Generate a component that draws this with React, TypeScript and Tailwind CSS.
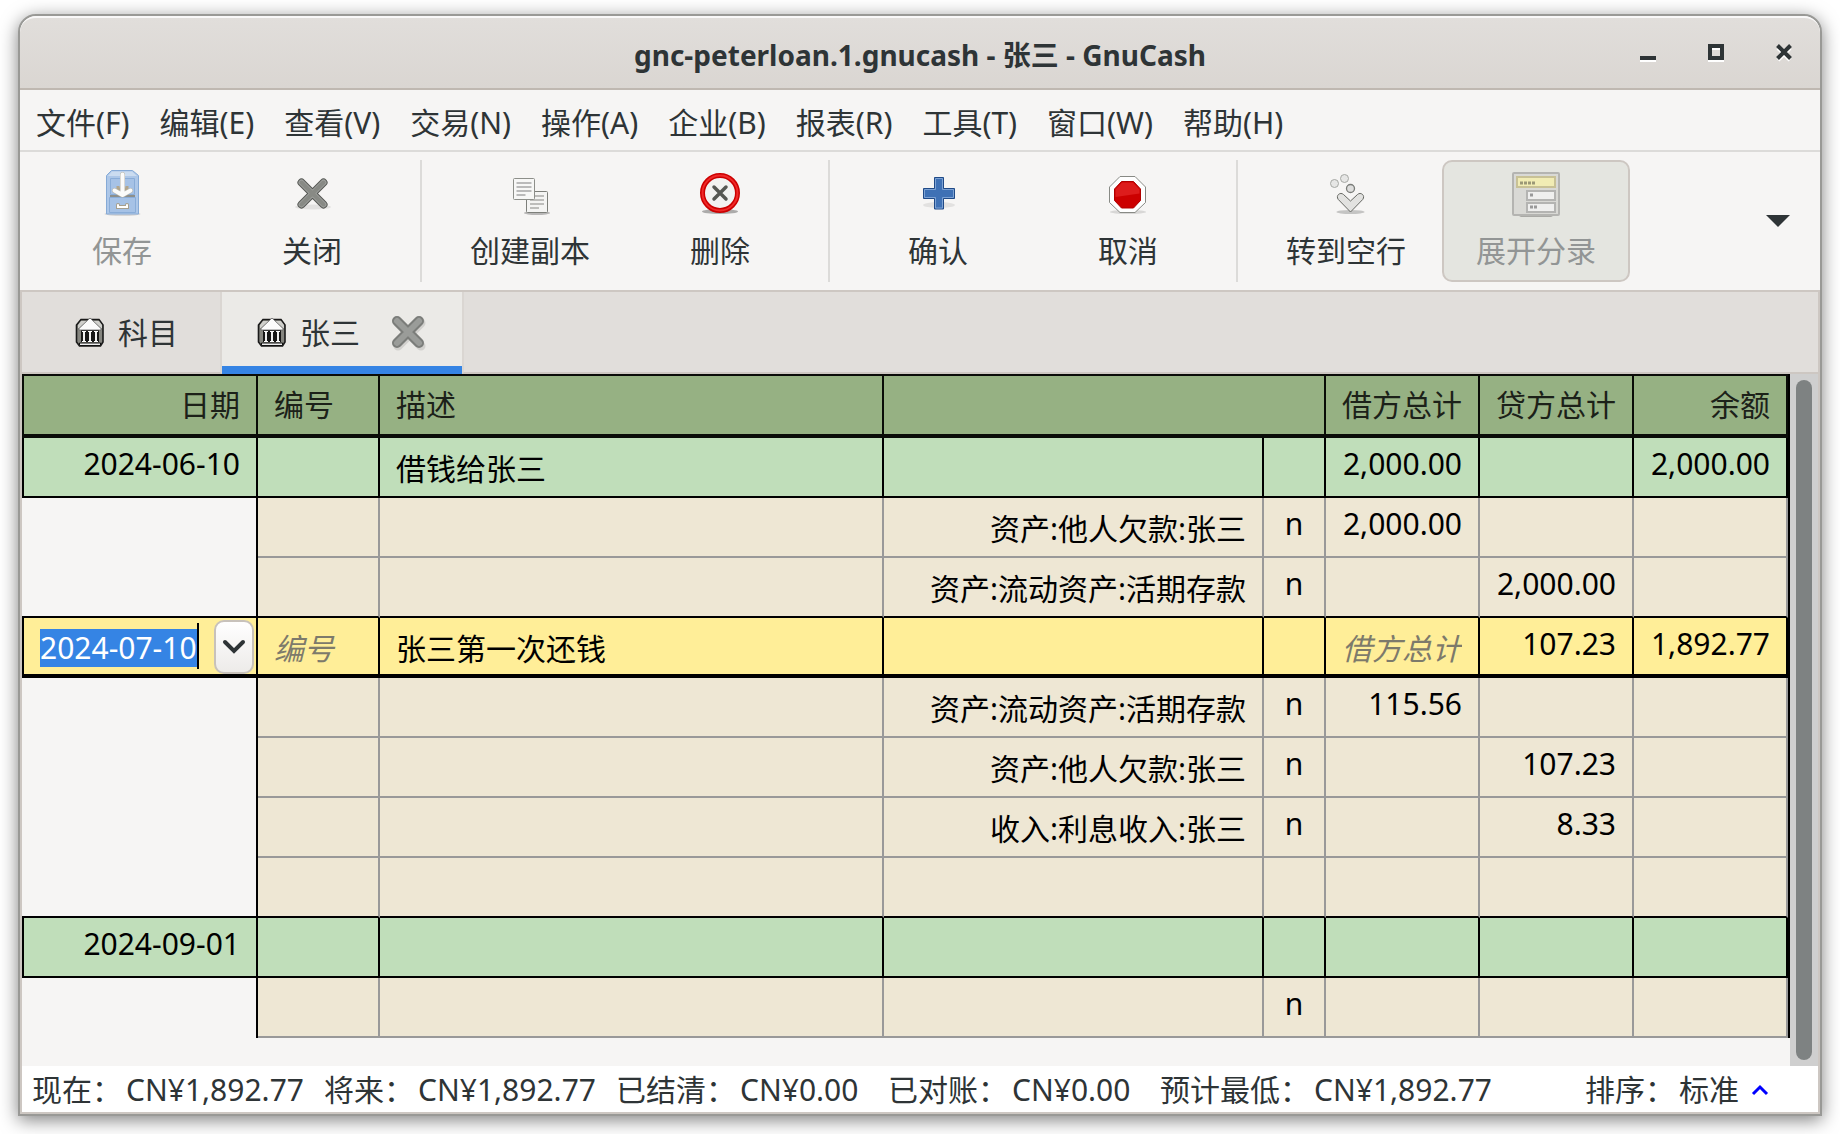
import React from "react";
import clsx from "clsx";

const menus = [
  "文件(F)",
  "编辑(E)",
  "查看(V)",
  "交易(N)",
  "操作(A)",
  "企业(B)",
  "报表(R)",
  "工具(T)",
  "窗口(W)",
  "帮助(H)",
];

type Row = {
  kind: "trans" | "split" | "active";
  date?: string;
  desc?: string;
  account?: string;
  flag?: string;
  debit?: string;
  credit?: string;
  balance?: string;
};

const rows: Row[] = [
  { kind: "trans", date: "2024-06-10", desc: "借钱给张三", debit: "2,000.00", balance: "2,000.00" },
  { kind: "split", account: "资产:他人欠款:张三", flag: "n", debit: "2,000.00" },
  { kind: "split", account: "资产:流动资产:活期存款", flag: "n", credit: "2,000.00" },
  { kind: "active", date: "2024-07-10", desc: "张三第一次还钱", credit: "107.23", balance: "1,892.77" },
  { kind: "split", account: "资产:流动资产:活期存款", flag: "n", debit: "115.56" },
  { kind: "split", account: "资产:他人欠款:张三", flag: "n", credit: "107.23" },
  { kind: "split", account: "收入:利息收入:张三", flag: "n", credit: "8.33" },
  { kind: "split" },
  { kind: "trans", date: "2024-09-01" },
  { kind: "split", flag: "n" },
];

const summary = [
  { label: "现在：", value: "CN¥1,892.77", width: "w-[292px]" },
  { label: "将来：", value: "CN¥1,892.77", width: "w-[292px]" },
  { label: "已结清：", value: "CN¥0.00", width: "w-[272px]" },
  { label: "已对账：", value: "CN¥0.00", width: "w-[272px]" },
  { label: "预计最低：", value: "CN¥1,892.77", width: "" },
];

function SaveIcon() {
  return (
    <svg viewBox="0 0 48 48" className="w-12 h-12">
      <ellipse cx="24.500" cy="44" rx="18" ry="2" fill="#000" opacity=".12" />
      <path d="M8.500 5.500l5-5h21l6 5v38.500h-32z" fill="#adc7e8" stroke="#86aad6" />
      <path d="M10 6l4-4.500h20L39 6z" fill="#cbdcf0" />
      <path d="M12.500 8.500h24v16h-24zM11.500 27.500h26v15h-26z" fill="#a6c2e6" stroke="#8aadd8" />
      <path d="M12 26h25" stroke="#8d8f8b" strokeWidth="2" />
      <path d="M20 16v3h9v-3" fill="none" stroke="#b3a68c" strokeWidth="3" />
      <path d="M20 35v2h9v-2" fill="none" stroke="#a79f8d" strokeWidth="4" strokeLinecap="round" />
      <path d="M20 35v2h9v-2" fill="none" stroke="#fff" strokeWidth="2" strokeLinecap="round" />
      <path d="M24.500 4.500v20M16.500 20.500l8 4.500 8-4.500" fill="none" stroke="#b9b6ab" strokeWidth="5" strokeLinecap="round" strokeLinejoin="round" />
      <path d="M24.500 4.500v20M16.500 20.500l8 4.500 8-4.500" fill="none" stroke="#fbfbfa" strokeWidth="4" strokeLinecap="round" strokeLinejoin="round" />
    </svg>
  );
}

function CloseIcon() {
  return (
    <svg viewBox="0 0 48 48" className="w-12 h-12">
      <ellipse cx="25" cy="37" rx="18" ry="2.500" fill="#000" opacity=".08" />
      <path d="M13.500 12.500l22 22M35.500 12.500l-22 22" stroke="#555753" strokeWidth="8" strokeLinecap="round" />
      <path d="M13.500 12.500l22 22M35.500 12.500l-22 22" stroke="#a0a29f" strokeWidth="6" strokeLinecap="round" />
      <path d="M13.500 12.500l22 22M35.500 12.500l-22 22" stroke="#888a85" strokeWidth="4" strokeLinecap="round" />
    </svg>
  );
}

function DuplicateIcon() {
  return (
    <svg viewBox="0 0 48 48" className="w-12 h-12">
      <ellipse cx="31" cy="43" rx="13" ry="2" fill="#000" opacity=".25" />
      <rect x="20.500" y="21.500" width="21" height="21" rx="1" fill="#f4f4f3" stroke="#7d7f7a" />
      <path d="M24 26h14M24 30h14M24 34h14M24 38h9" stroke="#bdbdbb" strokeWidth="2" />
      <rect x="7.500" y="8.500" width="21" height="21" rx="1" fill="#f7f7f6" stroke="#8d8f8a" />
      <path d="M10.500 13h15M10.500 17h15M10.500 21h15M10.500 25h9" stroke="#bababa" strokeWidth="2" />
    </svg>
  );
}

function DeleteIcon() {
  return (
    <svg viewBox="0 0 48 48" className="w-12 h-12">
      <ellipse cx="24" cy="41.500" rx="18" ry="2.500" fill="#000" opacity=".3" />
      <circle cx="24" cy="23" r="17.500" fill="#f2f2f1" stroke="#cc0000" strokeWidth="5" />
      <circle cx="24" cy="23" r="17.500" fill="none" stroke="#ef2929" strokeWidth="2" />
      <path d="M18 17l12 12M30 17L18 29" stroke="#555753" strokeWidth="3.500" strokeLinecap="round" />
    </svg>
  );
}

function PlusIcon() {
  return (
    <svg viewBox="0 0 48 48" className="w-12 h-12">
      <ellipse cx="25" cy="35" rx="16" ry="3" fill="#000" opacity=".08" />
      <path
        d="M20.500 7.500h9v11h11v10h-11v10.500h-9V28.500H9.500v-10h11z"
        fill="#3f71b5"
        stroke="#204a87"
        strokeLinejoin="round"
      />
      <path d="M21.500 8.500h7v11h11v8h-11V38h-7V27.500h-11v-8h11z" fill="none" stroke="#7ea3d4" />
    </svg>
  );
}

function StopIcon() {
  return (
    <svg viewBox="0 0 48 48" className="w-12 h-12">
      <ellipse cx="24" cy="42" rx="18" ry="2" fill="#000" opacity=".12" />
      <path d="M16 6.500h15L41.500 17v15.500L31 42.500H16L5.500 32.500V17z" fill="#fff" stroke="#888a85" />
      <path d="M17.500 11.500h12l7 7.500v11.500l-7 7.500h-12l-7-7.500V19z" fill="#cc0000" stroke="#b00000" />
      <path d="M18 12.500h11l6.500 7v4L11.500 27v-7.500z" fill="#dd1c1c" />
    </svg>
  );
}

function JumpIcon() {
  return (
    <svg viewBox="0 0 48 48" className="w-12 h-12">
      <ellipse cx="28.500" cy="42" rx="14" ry="2" fill="#000" opacity=".2" />
      <circle cx="12.500" cy="13.500" r="4" fill="#e6e6e5" stroke="#a6a8a4" />
      <circle cx="22.500" cy="8.500" r="4" fill="#e6e6e5" stroke="#a6a8a4" />
      <circle cx="28.500" cy="18.500" r="4" fill="#dededd" stroke="#7a7c78" strokeWidth="1.300" />
      <path
        d="M28.500 42L16.300 29.500c-3-4 2-8 5.200-5l7 6.500 7-6.500c3.200-3 8.200 1 5.200 5z"
        fill="#e2e2e0"
        stroke="#666863"
        strokeLinejoin="round"
      />
    </svg>
  );
}

function ExpandIcon() {
  return (
    <svg viewBox="0 0 48 48" className="w-12 h-12">
      <path d="M3 44h42l-6 3H9z" fill="#a9a9a5" />
      <rect x="1" y="3" width="46" height="42" rx="1" fill="#d9d9d5" stroke="#b4b4b1" strokeWidth="2" />
      <rect x="5" y="7" width="38" height="10" fill="#f1ecb4" stroke="#c8c196" strokeWidth="2" />
      <path d="M8 13h3M12 13h3M16 13h3M20 13h3" stroke="#9b9877" strokeWidth="3" />
      <rect x="15" y="21" width="28" height="9" fill="#efefee" stroke="#b4b4b2" strokeWidth="2" />
      <path d="M18 25h3" stroke="#999" strokeWidth="3" />
      <rect x="15" y="33" width="28" height="9" fill="#efefee" stroke="#b4b4b2" strokeWidth="2" />
      <path d="M18 37h3M22 37h3" stroke="#999" strokeWidth="3" />
    </svg>
  );
}

function BankIcon() {
  return (
    <svg viewBox="0 0 32 32" className="w-8 h-8 shrink-0">
      <path d="M7 2.500h18l4 5.500v17l-2.500 4h-21L2.500 25V8z" fill="#85857f" stroke="#1a1a1a" strokeWidth="1.600" />
      <path d="M7 4h6L5 11H4V8zM25 4h-6l8 7h1V8z" fill="#cfcfcb" />
      <path d="M7 12.500h18V25H7z" fill="#161616" />
      <path d="M16 1l11 10.500v1.500H5v-1.500z" fill="#fbfbfb" stroke="#666" strokeWidth=".800" />
      <path d="M10 14v11M16 14v11M22 14v11" stroke="#f0f0f0" strokeWidth="2" />
      <path d="M8 14.500h4M14 14.500h4M20 14.500h4M8 24.500h4M14 24.500h4M20 24.500h4" stroke="#fff" />
      <path d="M5.500 26h21v2.500h-21z" fill="#eee" stroke="#111" />
    </svg>
  );
}

type ToolProps = { icon: React.ReactNode; label: string; disabled?: boolean; pressed?: boolean };

function Tool({ icon, label, disabled, pressed }: ToolProps) {
  return (
    <button
      type="button"
      disabled={disabled}
      aria-pressed={pressed}
      className={clsx(
        "flex w-[188px] flex-col items-center rounded-[10px] border-2 pt-2",
        pressed ? "border-[#cdc7c2] bg-[#e4e5e0]" : "border-transparent",
        disabled && "text-[#929595]"
      )}
    >
      {icon}
      <span className="mt-[13px] leading-[40px]">{label}</span>
    </button>
  );
}

function Separator() {
  return <div className="mx-3 w-[2px] bg-[#dcdbd9]" />;
}

function Register() {
  return (
    <table className="w-full table-fixed border-separate border-spacing-0 border-r-2 border-black text-black">
      <colgroup>
        <col className="w-[236px]" />
        <col className="w-[122px]" />
        <col />
        <col className="w-[380px]" />
        <col className="w-[62px]" />
        <col className="w-[154px]" />
        <col className="w-[154px]" />
        <col className="w-[154px]" />
      </colgroup>
      <thead>
        <tr className="h-16 bg-[#96b183] text-[#1c2119] [&>th]:border-t-2 [&>th]:border-r-2 [&>th]:border-b-4 [&>th]:border-[#0a0c08] [&>th]:px-4 [&>th]:py-0 [&>th]:font-normal">
          <th className="border-l-2 text-right">日期</th>
          <th className="text-left">编号</th>
          <th className="text-left">描述</th>
          <th colSpan={2} aria-label="转账" />
          <th className="text-right">借方总计</th>
          <th className="text-right">贷方总计</th>
          <th className="text-right">余额</th>
        </tr>
      </thead>
      <tbody>
        {rows.map((row, i) => {
          const split = row.kind === "split";
          const active = row.kind === "active";
          const beforeTrans = split && i + 1 < rows.length && rows[i + 1].kind !== "split";
          const cell = clsx(
            "border-r-2 align-top",
            active ? "border-b-4" : "border-b-2",
            split ? "border-r-[#999] bg-[#eee7d4]" : "border-black",
            split && (beforeTrans ? "border-b-black" : "border-b-[#999]"),
            row.kind === "trans" && "bg-[#c0deba]",
            active && "bg-[#ffee98]"
          );
          const num = clsx(cell, "px-4 pt-[6px] pb-0 text-right");
          const text = clsx(cell, "px-4 pt-[11px] pb-0");
          return (
            <tr key={i} className="h-[60px]">
              {split ? (
                <td className={clsx("border-r-2 border-r-black", beforeTrans && "border-b-2 border-b-black")} />
              ) : active ? (
                <td className={clsx(cell, "border-l-2 p-0")}>
                  <div className="flex h-14 justify-between pl-4">
                    <div className="flex items-center pt-1">
                      <input
                        aria-label="日期"
                        defaultValue={row.date}
                        className="h-[38px] w-[157px] bg-[#3584e4] p-0 text-white outline-none"
                      />
                      <span className="-mt-1 h-[46px] w-[2px] bg-black" />
                    </div>
                    <button
                      type="button"
                      aria-label="选择日期"
                      className="mt-[2px] mr-[2px] flex h-[54px] w-10 items-center justify-center rounded-[10px] border-2 border-[#c8c2bb] bg-linear-to-b from-white to-[#edebe9]"
                    >
                      <svg viewBox="0 0 24 16" className="h-4 w-6">
                        <path d="M3 3l9 9 9-9" fill="none" stroke="#2e3436" strokeWidth="4" strokeLinecap="round" />
                      </svg>
                    </button>
                  </div>
                </td>
              ) : (
                <td className={clsx(num, "border-l-2")}>{row.date}</td>
              )}
              <td className={text}>
                {active && (
                  <input
                    aria-label="编号"
                    placeholder="编号"
                    className="h-10 w-full p-0 outline-none placeholder:text-[#7d7a6b] placeholder:italic"
                  />
                )}
              </td>
              <td className={text}>
                {active ? (
                  <input aria-label="描述" defaultValue={row.desc} className="h-10 w-full p-0 outline-none" />
                ) : (
                  row.desc
                )}
              </td>
              <td className={clsx(text, "text-right")}>{row.account}</td>
              <td className={clsx(cell, "px-0 pt-[6px] pb-0 text-center")}>{row.flag}</td>
              {active ? (
                <td className={text}>
                  <input
                    aria-label="借方总计"
                    placeholder="借方总计"
                    className="h-10 w-full p-0 text-right outline-none placeholder:text-[#7d7a6b] placeholder:italic"
                  />
                </td>
              ) : (
                <td className={num}>{row.debit}</td>
              )}
              <td className={num}>{row.credit}</td>
              <td className={num}>{row.balance}</td>
            </tr>
          );
        })}
      </tbody>
    </table>
  );
}

export default function App() {
  return (
    <div
      lang="zh-CN"
      className="flex h-screen bg-white px-[18px] pt-[14px] pb-[18px] font-['Noto_Sans','Noto_Sans_CJK_SC',sans-serif] text-[30px] leading-[40px] text-[#2e3436]"
    >
      <div className="flex min-w-0 flex-1 flex-col overflow-hidden rounded-t-[18px] border-2 border-[#999996] bg-[#f6f5f4] shadow-[0_4px_18px_rgba(0,0,0,0.5)]">
        <header className="relative flex h-[74px] shrink-0 items-center justify-center rounded-t-2xl border-t-2 border-b-2 border-t-[#f9f8f8] border-b-[#bfb8b1] bg-linear-to-b from-[#e1dedb] to-[#dad6d2]">
          <h1 className="pt-1 text-[28px] font-bold">gnc-peterloan.1.gnucash - 张三 - GnuCash</h1>
          <div className="absolute top-0 right-7 flex h-full items-center gap-[52px]">
            <button type="button" aria-label="最小化">
              <svg viewBox="0 0 16 18" className="h-[18px] w-4">
                <path d="M0 16h16" stroke="#fff" strokeWidth="4" />
                <path d="M0 14h16" stroke="#2e3436" strokeWidth="4" />
              </svg>
            </button>
            <button type="button" aria-label="最大化">
              <svg viewBox="0 0 16 18" className="h-[18px] w-4">
                <path d="M2 4h12v12H2z" fill="none" stroke="#fff" strokeWidth="4" />
                <path d="M2 2h12v12H2z" fill="none" stroke="#2e3436" strokeWidth="4" />
              </svg>
            </button>
            <button type="button" aria-label="关闭窗口">
              <svg viewBox="0 0 16 18" className="h-[18px] w-4">
                <path d="M2 4l12 12M14 4L2 16" stroke="#fff" strokeWidth="4" />
                <path d="M1.500 1.500l13 13M14.500 1.500l-13 13" stroke="#2e3436" strokeWidth="4" />
              </svg>
            </button>
          </div>
        </header>

        <nav className="flex h-[62px] shrink-0 items-center border-b-2 border-[#dcdbd9] pt-[6px] pl-px">
          {menus.map((m) => (
            <button key={m} type="button" className="px-[15px]">
              {m}
            </button>
          ))}
        </nav>

        <div className="flex h-[138px] shrink-0 gap-0.5 px-2 py-2">
          <Tool icon={<SaveIcon />} label="保存" disabled />
          <Tool icon={<CloseIcon />} label="关闭" />
          <Separator />
          <Tool icon={<DuplicateIcon />} label="创建副本" />
          <Tool icon={<DeleteIcon />} label="删除" />
          <Separator />
          <Tool icon={<PlusIcon />} label="确认" />
          <Tool icon={<StopIcon />} label="取消" />
          <Separator />
          <Tool icon={<JumpIcon />} label="转到空行" />
          <Tool icon={<ExpandIcon />} label="展开分录" disabled pressed />
          <button type="button" aria-label="更多" className="mr-[22px] ml-auto">
            <svg viewBox="0 0 24 12" className="h-3 w-6">
              <path d="M0 0h24L12 12z" fill="#2e3436" />
            </svg>
          </button>
        </div>

        <div className="flex min-h-0 flex-1 flex-col border-2 border-[#cdc7c2]">
          <div role="tablist" className="flex h-[82px] shrink-0 bg-[#e1dedb]">
            <button
              type="button"
              role="tab"
              aria-selected={false}
              className="flex w-[200px] items-center gap-3 border-r-2 border-b-2 border-r-[#dad6d2] border-b-[#cdc7c2] pt-[2px] pl-[52px]"
            >
              <BankIcon />
              科目
            </button>
            <div className="flex w-[240px] items-center justify-center gap-7 border-b-8 border-[#3584e4] bg-[#ebeae7] pt-2">
              <button type="button" role="tab" aria-selected className="flex items-center gap-3">
                <BankIcon />
                张三
              </button>
              <button type="button" aria-label="关闭标签">
                <svg viewBox="0 0 40 40" className="h-10 w-10">
                  <path d="M10 10l23 23M33 10L10 33" stroke="#000" strokeWidth="9" strokeLinecap="round" opacity=".1" />
                  <path d="M9 8l22 22M31 8L9 30" stroke="#7b7d7a" strokeWidth="10" strokeLinecap="round" />
                  <path d="M9 8l22 22M31 8L9 30" stroke="#9a9c99" strokeWidth="6" strokeLinecap="round" />
                </svg>
              </button>
            </div>
            <div className="flex-1 border-b-2 border-l-2 border-b-[#cdc7c2] border-l-[#dad6d2]" />
          </div>

          <div className="flex min-h-0 flex-1">
            <div className="min-w-0 flex-1">
              <Register />
            </div>
            <div className="flex w-7 flex-col bg-[#cfcfcf] px-[6px] py-[6px]">
              <div className="flex-1 rounded-full bg-[#7e8282]" />
            </div>
          </div>

          <footer className="flex h-[46px] shrink-0 items-center bg-white pt-[2px] pr-[49px] pl-[10px] whitespace-nowrap">
            {summary.map((s) => (
              <div key={s.label} className={clsx("flex gap-1", s.width)}>
                <span>{s.label}</span>
                <span>{s.value}</span>
              </div>
            ))}
            <button type="button" className="ml-auto flex items-center gap-1">
              <span>排序：</span>
              <span>标准</span>
              <svg viewBox="0 0 18 12" className="ml-2 h-3 w-[18px]">
                <path d="M2 10l7-7 7 7" fill="none" stroke="#0000ff" strokeWidth="3" />
              </svg>
            </button>
          </footer>
        </div>
      </div>
    </div>
  );
}
